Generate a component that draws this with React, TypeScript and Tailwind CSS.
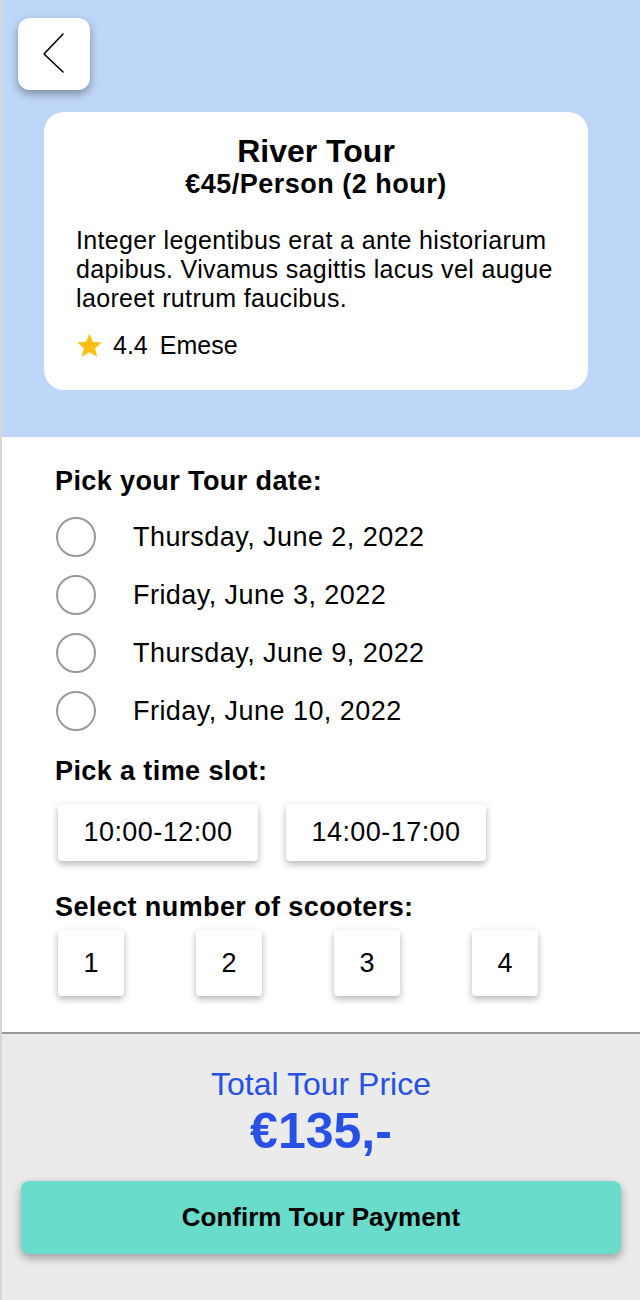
import { useState } from "react";

const dates = [
  "Thursday, June 2, 2022",
  "Friday, June 3, 2022",
  "Thursday, June 9, 2022",
  "Friday, June 10, 2022",
];

const slots = ["10:00-12:00", "14:00-17:00"];
const counts = [1, 2, 3, 4];

const about = [
  "Integer legentibus erat a ante historiarum",
  "dapibus. Vivamus sagittis lacus vel augue",
  "laoreet rutrum faucibus.",
];

function BackButton() {
  return (
    <button className="w-[72px] h-[72px] bg-white rounded-[12px] shadow-[0_4px_10px_rgba(0,0,0,0.35)] flex items-center justify-center">
      <svg width="72" height="72" viewBox="0 0 72 72" fill="none">
        <path d="M45 16 L26 36 L45 54" stroke="#000" strokeWidth="1.6" strokeLinecap="round" strokeLinejoin="round" />
      </svg>
    </button>
  );
}

function Star() {
  return (
    <svg width="27" height="27" viewBox="0 0 24 24">
      <path
        d="M12 1.5l3.1 7.2 7.8.6-5.9 5.1 1.8 7.6L12 18l-6.8 4 1.8-7.6-5.9-5.1 7.8-.6z"
        fill="#fbbf0f"
      />
    </svg>
  );
}

export default function App() {
  const [date, setDate] = useState<number | null>(null);

  return (
    <div className="w-[640px] h-[1300px] flex flex-col border-l-2 border-[#d6d6d6] font-['Liberation_Sans',Arial,sans-serif] text-black">
      {/* header */}
      <div className="bg-[#bed6f7] pt-[18px] pb-[47px]">
        <div className="pl-[16px]">
          <BackButton />
        </div>
        <div className="mt-[22px] mx-[42px] w-[544px] bg-white rounded-[20px] pt-[21px] pb-[30px] px-[32px]">
          <h1 className="text-center font-bold text-[32px] leading-[36px]">River Tour</h1>
          <p className="text-center font-bold text-[27px] leading-[30px] tracking-[0.5px]">€45/Person (2 hour)</p>
          <div className="mt-[27px] text-[25px] leading-[29px] tracking-[0.35px] whitespace-nowrap">
            {about.map((l) => (
              <p key={l}>{l}</p>
            ))}
          </div>
          <div className="mt-[18px] flex items-center h-[29px] text-[25px]">
            <Star />
            <span className="ml-[10px]">4.4</span>
            <span className="ml-[12px]">Emese</span>
          </div>
        </div>
      </div>

      {/* options */}
      <div className="bg-white px-[53px] pt-[30px] pb-[36px] border-b-2 border-[#9a9a9a]">
        <h2 className="font-bold text-[27px] leading-[28px] tracking-[0.4px]">Pick your Tour date:</h2>
        <div className="mt-[13px] flex flex-col">
          {dates.map((d, i) => (
            <label key={d} className="h-[58px] flex items-center cursor-pointer" onClick={() => setDate(i)}>
              <span className="ml-[1px] w-[40px] h-[40px] rounded-full border-2 border-[#9a9a9a] flex items-center justify-center">
                {date === i && <span className="w-[22px] h-[22px] rounded-full bg-[#2750e6]" />}
              </span>
              <span className="ml-[37px] text-[27px] tracking-[0.45px]">{d}</span>
            </label>
          ))}
        </div>

        <h2 className="mt-[17px] font-bold text-[27px] leading-[28px] tracking-[0.4px]">Pick a time slot:</h2>
        <div className="mt-[19px] flex gap-[28px] pl-[3px]">
          {slots.map((s) => (
            <button
              key={s}
              className="w-[200px] h-[57px] bg-white rounded-[4px] shadow-[0_3px_7px_rgba(0,0,0,0.3)] text-[27px] tracking-[0.45px]"
            >
              {s}
            </button>
          ))}
        </div>

        <h2 className="mt-[32px] font-bold text-[27px] leading-[28px] tracking-[0.4px]">Select number of scooters:</h2>
        <div className="mt-[9px] flex gap-[72px] pl-[3px]">
          {counts.map((n) => (
            <button
              key={n}
              className="w-[66px] h-[66px] bg-white rounded-[4px] shadow-[0_3px_7px_rgba(0,0,0,0.3)] text-[27px]"
            >
              {n}
            </button>
          ))}
        </div>
      </div>

      {/* total */}
      <div className="flex-1 bg-[#ebebeb] pt-[32px] px-[18px] flex flex-col items-center">
        <p className="text-[32px] leading-[36px] text-[#2750e6]">Total Tour Price</p>
        <p className="mt-[4px] text-[50px] leading-[50px] font-bold text-[#2750e6]">€135,-</p>
        <button className="mt-[25px] w-[600px] h-[73px] bg-[#6adccb] rounded-[8px] shadow-[0_4px_10px_rgba(0,0,0,0.35)] font-bold text-[26px]">
          Confirm Tour Payment
        </button>
      </div>
    </div>
  );
}
